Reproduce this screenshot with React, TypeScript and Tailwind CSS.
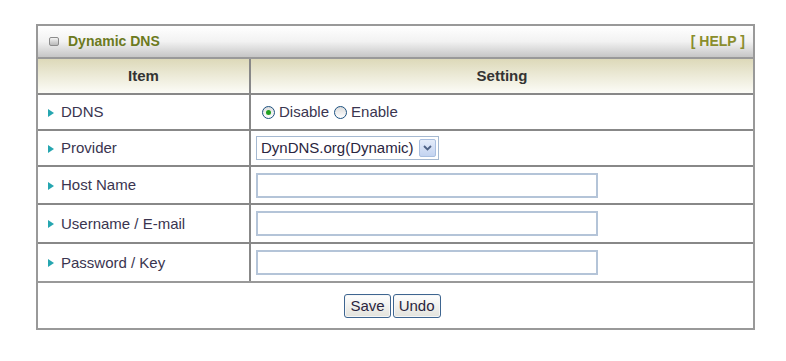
import React from "react";

const rows = [
  { label: "DDNS", kind: "radio" },
  { label: "Provider", kind: "select" },
  { label: "Host Name", kind: "input" },
  { label: "Username / E-mail", kind: "input" },
  { label: "Password / Key", kind: "input" },
];

const rowHeights = ["h-[36px]", "h-[36px]", "h-[38px]", "h-[39px]", "h-[39px]"];

function Radio({ checked }: { checked?: boolean }) {
  return (
    <span className="inline-flex h-[13px] w-[13px] items-center justify-center rounded-full border border-[#1c5180] bg-gradient-to-b from-[#dcdcdc] to-white">
      {checked && <span className="h-[5px] w-[5px] rounded-full bg-[#21a121]" />}
    </span>
  );
}

function Field({ kind }: { kind: string }) {
  if (kind === "radio") {
    return (
      <div className="flex items-center gap-[4px] pl-[11px] pt-[1px] text-[15px] text-[#3a3550]">
        <Radio checked />
        <span className="mr-[1px]">Disable</span>
        <Radio />
        <span>Enable</span>
      </div>
    );
  }
  if (kind === "select") {
    return (
      <div className="ml-[5px] flex h-[24px] w-[183px] items-center justify-between border border-[#a5b9d1] bg-white pl-[4px] pr-[2px] text-[15px] text-[#2a2540]">
        <span>DynDNS.org(Dynamic)</span>
        <span className="flex h-[18px] w-[17px] items-center justify-center rounded-[2px] border border-[#a9bfe0] bg-gradient-to-b from-[#e4ecfa] to-[#c3d3f0]">
          <svg width="9" height="6" viewBox="0 0 9 6">
            <path d="M1 1 L4.5 4.5 L8 1" fill="none" stroke="#4d6185" strokeWidth="1.8" />
          </svg>
        </span>
      </div>
    );
  }
  return <div className="ml-[5px] h-[25px] w-[342px] border-2 border-[#b4c4d8] bg-white" />;
}

function Button({ children }: { children: React.ReactNode }) {
  return (
    <button className="h-[24px] rounded-[3px] border border-[#3e6590] bg-gradient-to-b from-white to-[#e2e2dc] px-[5px] text-[15px] leading-none text-[#2a2540] shadow-[inset_0_0_0_1px_#f6f6f6]">
      {children}
    </button>
  );
}

export default function App() {
  return (
    <div className="h-[361px] w-[786px] bg-white pl-[36px] pt-[24px] font-['Liberation_Sans',Arial,sans-serif]">
      <div className="w-[719px] border-2 border-[#999]">
        <div className="flex h-[31px] items-center justify-between bg-gradient-to-b from-white via-[#f2f2f2] to-[#c6c6c6] pl-[11px] pr-[8px]">
          <div className="flex items-center gap-[9px]">
            <span className="h-[9px] w-[10px] rounded-[2px] border border-[#8c8c8c] bg-gradient-to-b from-[#f4f4f4] to-[#b9b9b9]" />
            <span className="text-[14px] font-bold text-[#6c7a1e]">Dynamic DNS</span>
          </div>
          <span className="text-[14px] font-bold text-[#8a8d2c]">[ HELP ]</span>
        </div>
        <div className="grid grid-cols-[213px_1fr] border-t-2 border-[#999]">
          <div className="flex h-[34px] items-center justify-center border-r-2 border-[#888] bg-gradient-to-b from-[#ddd9b9] to-[#fcfcf7] text-[15px] font-bold text-[#333]">
            Item
          </div>
          <div className="flex h-[34px] items-center justify-center bg-gradient-to-b from-[#ddd9b9] to-[#fcfcf7] text-[15px] font-bold text-[#333]">
            Setting
          </div>
          {rows.map((r, i) => (
            <React.Fragment key={r.label}>
              <div
                className={`flex ${rowHeights[i]} items-center gap-[7px] border-r-2 border-t-2 border-[#888] pl-[10px] pt-[1px] text-[15px] text-[#3a3550]`}
              >
                <svg width="6" height="8" viewBox="0 0 6 8">
                  <path d="M0 0 L6 4 L0 8 Z" fill="#26a6b0" />
                </svg>
                <span>{r.label}</span>
              </div>
              <div className={`flex ${rowHeights[i]} items-center border-t-2 border-[#888]`}>
                <Field kind={r.kind} />
              </div>
            </React.Fragment>
          ))}
        </div>
        <div className="flex h-[47px] items-center justify-center gap-[2px] border-t-2 border-[#999] pr-[6px]">
          <Button>Save</Button>
          <Button>Undo</Button>
        </div>
      </div>
    </div>
  );
}
